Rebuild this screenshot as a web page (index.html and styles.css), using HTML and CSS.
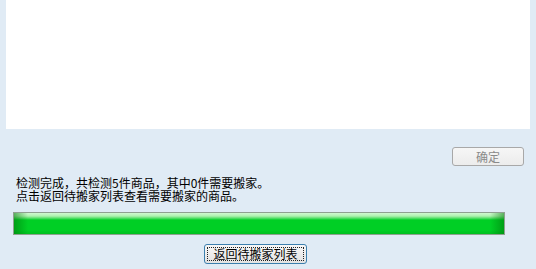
FILE: index.html
```html
<!DOCTYPE html>
<html lang="zh-CN">
<head>
<meta charset="utf-8">
<link rel="stylesheet" href="styles.css">
</head>
<body>
<div class="panel"></div>
<div class="confirm-row"><button class="btn-confirm" disabled>确定</button></div>
<div class="msg">
  <div>检测完成，共检测5件商品，其中0件需要搬家。</div>
  <div>点击返回待搬家列表查看需要搬家的商品。</div>
</div>
<div class="progress"><div class="progress-fill"></div></div>
<div class="back-row"><button class="btn-back"><span class="focus">返回待搬家列表</span></button></div>
</body>
</html>
```
FILE: styles.css
```css
html, body {
  margin: 0;
  padding: 0;
}
body {
  width: 536px;
  height: 269px;
  background: #e0ebf5;
  font-family: "SimSun", "Noto Sans CJK SC", sans-serif;
  font-size: 12px;
  color: #000;
  overflow: hidden;
}
.panel {
  margin-left: 6px;
  width: 524px;
  height: 129px;
  background: #fff;
}
.confirm-row {
  display: flex;
  justify-content: flex-end;
  padding-right: 12px;
  margin-top: 18px;
}
.btn-confirm {
  box-sizing: border-box;
  width: 72px;
  height: 19px;
  border: 1px solid #a8a8a8;
  border-radius: 3px;
  background: linear-gradient(#f6f6f6, #ececec);
  color: #8a8a8a;
  font-family: "Noto Sans CJK SC", sans-serif;
  font-size: 12px;
  line-height: 15px;
  padding: 0;
}
.msg {
  margin-top: 10px;
  margin-left: 16px;
  line-height: 13px;
  font-family: "Noto Sans CJK SC", sans-serif;
}
.progress {
  box-sizing: border-box;
  margin-top: 10px;
  margin-left: 13px;
  width: 492px;
  height: 23px;
  border: 1px solid #8fa08f;
  background: #00cc22;
  padding: 0;
}
.progress-fill {
  height: 100%;
  background:
    linear-gradient(90deg, rgba(0,120,10,0.55), rgba(0,150,20,0) 14px, rgba(0,150,20,0) calc(100% - 14px), rgba(0,120,10,0.55)),
    linear-gradient(#d0f8d0 0, #b0f2b0 3px, #60e070 5px, #00cf25 7px, #00cf25 17px, #00c020 100%);
}
.back-row {
  margin-top: 9px;
  margin-left: 204px;
}
.btn-back {
  box-sizing: border-box;
  width: 103px;
  height: 20px;
  border: 1px solid #3b7fae;
  border-radius: 3px;
  background: linear-gradient(#f7f7f7, #e2e2e2);
  padding: 2px;
  font-family: "Noto Sans CJK SC", sans-serif;
  font-size: 12px;
  color: #000;
  display: flex;
}
.focus {
  flex: 1;
  border: 1px dotted #222;
  line-height: 12px;
  text-align: center;
}
```
